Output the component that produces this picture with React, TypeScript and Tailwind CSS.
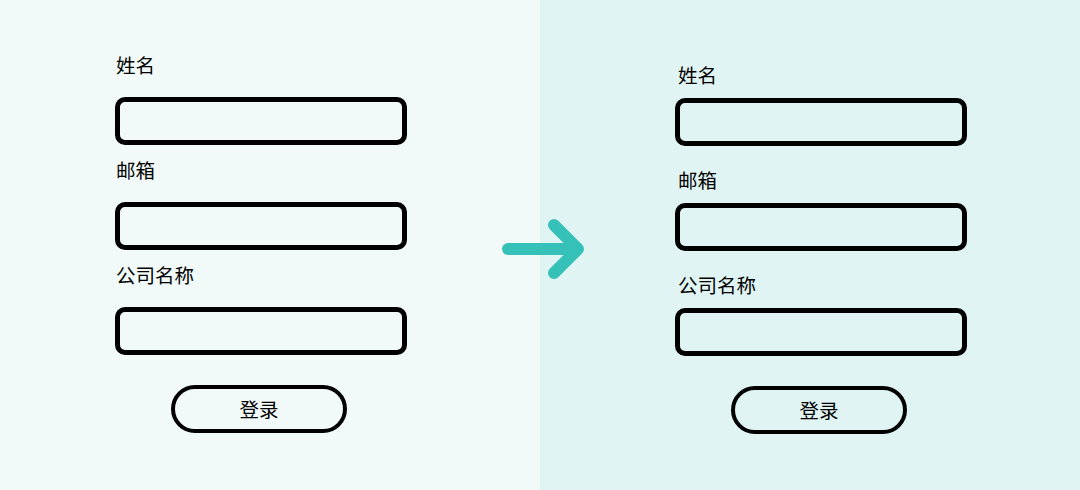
const font = { fontFamily: '"Noto Sans CJK SC", "Noto Sans", sans-serif' };

type FormProps = {
  labelGap: string;
  groupGap: string;
  top: string;
  left: string;
  labelPad: string;
};

const FIELDS = ['姓名', '邮箱', '公司名称'];

function LoginForm({ labelGap, groupGap, top, left, labelPad }: FormProps) {
  return (
    <div className={`flex flex-col w-[292px] ${top} ${left}`}>
      <div className={`flex flex-col ${groupGap}`}>
        {FIELDS.map((f) => (
          <div key={f} className={`flex flex-col ${labelGap}`}>
            <label className={`h-[24px] leading-[24px] text-[19.5px] text-black ${labelPad}`}>{f}</label>
            <input className="h-[48px] w-full rounded-[10px] border-[5px] border-black bg-transparent outline-none" />
          </div>
        ))}
      </div>
      <button className="mt-[30px] ml-[56px] h-[48px] w-[176px] rounded-full border-[4px] border-black bg-transparent text-[19.5px] text-black">
        登录
      </button>
    </div>
  );
}

export default function App() {
  return (
    <div className="relative flex h-[490px] w-[1080px] overflow-hidden" style={font}>
      <div className="h-full w-[540px] bg-[#f1faf9]">
        <LoginForm top="pt-[53px]" left="ml-[115px]" labelGap="gap-[20px]" groupGap="gap-[13px]" labelPad="pl-[1px]" />
      </div>
      <div className="h-full w-[540px] bg-[#e0f5f3]">
        <LoginForm top="pt-[63px]" left="ml-[135px]" labelGap="gap-[11px]" groupGap="gap-[22px]" labelPad="pl-[3px]" />
      </div>
      {/* arrow between the two versions */}
      <svg className="absolute left-[495px] top-[210px]" width="100" height="80" viewBox="0 0 100 80">
        <g fill="none" stroke="#35c1b7" strokeWidth="12" strokeLinecap="round" strokeLinejoin="round">
          <path d="M13 39 H81" />
          <path d="M59 15 L83 39 L59 63" />
        </g>
      </svg>
    </div>
  );
}
